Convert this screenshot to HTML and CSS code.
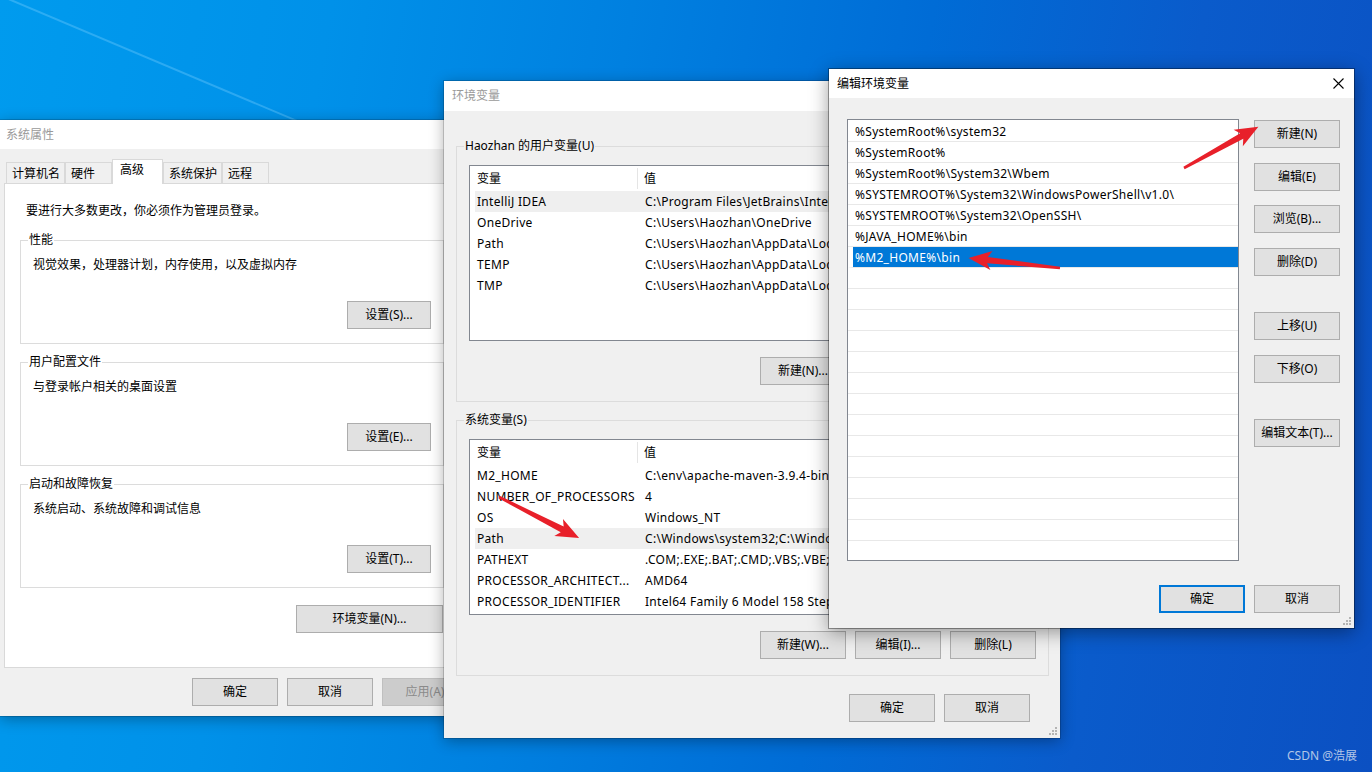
FILE: index.html
```html
<!DOCTYPE html>
<html lang="zh-CN">
<head>
<meta charset="utf-8">
<title>编辑环境变量</title>
<link rel="stylesheet" href="styles.css">
</head>
<body>
<div class="desktop">
  <svg class="streak" width="1372" height="772" viewBox="0 0 1372 772" aria-hidden="true">
    <line x1="6" y1="-2" x2="470" y2="194" stroke="#7fd0ff" stroke-opacity="0.35" stroke-width="2"/>
  </svg>

  <section class="win win-sys">
    <header class="titlebar inactive">系统属性</header>
    <div class="sys-body">
      <nav class="tabs">
        <span class="tab">计算机名</span>
        <span class="tab">硬件</span>
        <span class="tab active">高级</span>
        <span class="tab">系统保护</span>
        <span class="tab">远程</span>
      </nav>
      <div class="tab-panel">
        <p class="note">要进行大多数更改，你必须作为管理员登录。</p>
        <fieldset class="group sys-group">
          <legend>性能</legend>
          <p class="desc">视觉效果，处理器计划，内存使用，以及虚拟内存</p>
          <button class="btn btn-set">设置(S)...</button>
        </fieldset>
        <fieldset class="group sys-group">
          <legend>用户配置文件</legend>
          <p class="desc">与登录帐户相关的桌面设置</p>
          <button class="btn btn-set">设置(E)...</button>
        </fieldset>
        <fieldset class="group sys-group">
          <legend>启动和故障恢复</legend>
          <p class="desc">系统启动、系统故障和调试信息</p>
          <button class="btn btn-set">设置(T)...</button>
        </fieldset>
        <div class="env-row">
          <button class="btn btn-env">环境变量(N)...</button>
        </div>
      </div>
      <div class="footer sys-footer">
        <button class="btn">确定</button>
        <button class="btn">取消</button>
        <button class="btn disabled">应用(A)</button>
      </div>
    </div>
  </section>

  <section class="win win-env">
    <header class="titlebar inactive env-title">环境变量</header>
    <div class="env-body">
      <fieldset class="group env-group">
        <legend>Haozhan 的用户变量(U)</legend>
        <div class="vlist">
          <div class="vhead"><span class="vh-name">变量</span><span class="vh-val">值</span></div>
          <div class="vrow hl"><span class="n">IntelliJ IDEA</span><span class="v">C:\Program Files\JetBrains\Intel</span></div>
          <div class="vrow"><span class="n">OneDrive</span><span class="v">C:\Users\Haozhan\OneDrive</span></div>
          <div class="vrow"><span class="n">Path</span><span class="v">C:\Users\Haozhan\AppData\Loc</span></div>
          <div class="vrow"><span class="n">TEMP</span><span class="v">C:\Users\Haozhan\AppData\Loc</span></div>
          <div class="vrow"><span class="n">TMP</span><span class="v">C:\Users\Haozhan\AppData\Loc</span></div>
        </div>
        <div class="btn-row">
          <button class="btn">新建(N)...</button>
          <button class="btn">编辑(E)...</button>
          <button class="btn">删除(D)</button>
        </div>
      </fieldset>
      <fieldset class="group env-group env-group2">
        <legend>系统变量(S)</legend>
        <div class="vlist">
          <div class="vhead"><span class="vh-name">变量</span><span class="vh-val">值</span></div>
          <div class="vrow"><span class="n">M2_HOME</span><span class="v">C:\env\apache-maven-3.9.4-bin\</span></div>
          <div class="vrow"><span class="n">NUMBER_OF_PROCESSORS</span><span class="v">4</span></div>
          <div class="vrow"><span class="n">OS</span><span class="v">Windows_NT</span></div>
          <div class="vrow hl"><span class="n">Path</span><span class="v">C:\Windows\system32;C:\Windo</span></div>
          <div class="vrow"><span class="n">PATHEXT</span><span class="v">.COM;.EXE;.BAT;.CMD;.VBS;.VBE;</span></div>
          <div class="vrow"><span class="n">PROCESSOR_ARCHITECT...</span><span class="v">AMD64</span></div>
          <div class="vrow"><span class="n">PROCESSOR_IDENTIFIER</span><span class="v">Intel64 Family 6 Model 158 Step</span></div>
        </div>
        <div class="btn-row">
          <button class="btn">新建(W)...</button>
          <button class="btn">编辑(I)...</button>
          <button class="btn">删除(L)</button>
        </div>
      </fieldset>
      <div class="footer env-footer">
        <button class="btn">确定</button>
        <button class="btn">取消</button>
      </div>
    </div>
    <svg class="grip" width="8" height="8" viewBox="0 0 8 8" aria-hidden="true">
      <rect x="6" y="0" width="2" height="2"/><rect x="3" y="3" width="2" height="2"/><rect x="6" y="3" width="2" height="2"/>
      <rect x="0" y="6" width="2" height="2"/><rect x="3" y="6" width="2" height="2"/><rect x="6" y="6" width="2" height="2"/>
    </svg>
  </section>

  <section class="win win-edit">
    <header class="titlebar edit-title">
      <span>编辑环境变量</span>
      <svg class="close" width="11" height="11" viewBox="0 0 11 11" aria-hidden="true">
        <path d="M0.5 0.5 L10.5 10.5 M10.5 0.5 L0.5 10.5" stroke="#000" stroke-width="1.1" fill="none"/>
      </svg>
    </header>
    <div class="edit-body">
      <div class="edit-main">
        <div class="elist">
          <div class="erow">%SystemRoot%\system32</div>
          <div class="erow">%SystemRoot%</div>
          <div class="erow">%SystemRoot%\System32\Wbem</div>
          <div class="erow">%SYSTEMROOT%\System32\WindowsPowerShell\v1.0\</div>
          <div class="erow">%SYSTEMROOT%\System32\OpenSSH\</div>
          <div class="erow">%JAVA_HOME%\bin</div>
          <div class="erow sel">%M2_HOME%\bin</div>
          <div class="erow"></div><div class="erow"></div><div class="erow"></div><div class="erow"></div>
          <div class="erow"></div><div class="erow"></div><div class="erow"></div><div class="erow"></div>
          <div class="erow"></div><div class="erow"></div><div class="erow"></div><div class="erow"></div>
          <div class="erow"></div><div class="erow"></div>
        </div>
        <div class="ebtns">
          <button class="btn">新建(N)</button>
          <button class="btn">编辑(E)</button>
          <button class="btn">浏览(B)...</button>
          <button class="btn">删除(D)</button>
          <button class="btn sep">上移(U)</button>
          <button class="btn">下移(O)</button>
          <button class="btn sep">编辑文本(T)...</button>
        </div>
      </div>
      <div class="footer edit-footer">
        <button class="btn primary">确定</button>
        <button class="btn">取消</button>
      </div>
    </div>
    <svg class="grip" width="8" height="8" viewBox="0 0 8 8" aria-hidden="true">
      <rect x="6" y="0" width="2" height="2"/><rect x="3" y="3" width="2" height="2"/><rect x="6" y="3" width="2" height="2"/>
      <rect x="0" y="6" width="2" height="2"/><rect x="3" y="6" width="2" height="2"/><rect x="6" y="6" width="2" height="2"/>
    </svg>
  </section>

  <svg class="arrows" width="1372" height="772" viewBox="0 0 1372 772" aria-hidden="true">
    <polygon transform="translate(1184,168) rotate(-29)" points="0,-1.3 66,-3.2 62,-9.5 85,0 62,9.5 66,3.2 0,1.3"/>
    <polygon transform="translate(1060,268) rotate(186.2)" points="0,-1.3 73,-3.2 69,-9.5 92,0 69,9.5 73,3.2 0,1.3"/>
    <polygon transform="translate(499,497) rotate(27.1)" points="0,-1.3 71,-3.2 67,-9.5 90,0 67,9.5 71,3.2 0,1.3"/>
  </svg>

  <div class="watermark">CSDN @浩展</div>
</div>
</body>
</html>
```

FILE: styles.css
```css
* { box-sizing: border-box; }
html, body { margin: 0; padding: 0; }
body {
  font-family: "Noto Sans", "Noto Sans CJK SC", sans-serif;
  font-size: 12px;
  line-height: 16px;
  color: #000;
}
p { margin: 0; }

.desktop {
  position: relative;
  width: 1372px;
  height: 772px;
  overflow: hidden;
  background: linear-gradient(100deg, #009bee 0%, #0091e9 22%, #0080e0 42%, #006cd6 62%, #0a5bcb 80%, #0b50c2 100%);
}
.streak { position: absolute; left: 0; top: 0; }

/* windows */
.win {
  position: absolute;
  display: flex;
  flex-direction: column;
  background: #f0f0f0;
  box-shadow: 0 0 0 1px rgba(0, 0, 0, 0.16), 0 3px 14px rgba(0, 0, 0, 0.32);
}
.titlebar {
  flex: none;
  height: 29px;
  display: flex;
  align-items: center;
  background: #fff;
  padding-left: 6px;
}
.titlebar.inactive { color: #9a9a9a; }

.btn {
  font: inherit;
  line-height: 16px;
  color: #000;
  width: 86px;
  height: 28px;
  padding: 0;
  background: #e1e1e1;
  border: 1px solid #adadad;
  border-radius: 0;
  flex: none;
}
.btn.disabled { background: #cccccc; border-color: #bfbfbf; color: #8a8a8a; }
.btn.primary { border: 2px solid #0078d7; }

.footer { display: flex; justify-content: flex-end; gap: 9px; flex: none; }

.group {
  margin: 0;
  border: 1px solid #dcdcdc;
  min-width: 0;
}
.group legend {
  padding: 0 1px;
  margin-left: -5px;
  line-height: 16px;
}

/* 系统属性 */
.win-sys { left: 0; top: 120px; width: 477px; height: 596px; }
.sys-body { flex: 1; display: flex; flex-direction: column; padding: 10px 4px 0 4px; }
.tabs {
  display: flex;
  align-items: flex-end;
  height: 24px;
  padding-left: 2px;
  position: relative;
  z-index: 1;
}
.tab {
  height: 21px;
  min-width: 47px;
  padding: 0 4px 0 5px;
  line-height: 21px;
  border: 1px solid #d9d9d9;
  border-bottom: none;
  background: #f0f0f0;
  white-space: nowrap;
}
.tab.active {
  height: 25px;
  min-width: 51px;
  margin-bottom: -1px;
  padding: 0 6px 0 7px;
  line-height: 20px;
  background: #fff;
  position: relative;
  z-index: 2;
}
.tab-panel {
  height: 485px;
  background: #fff;
  border: 1px solid #d9d9d9;
  padding-top: 19px;
  display: flex;
  flex-direction: column;
}
.note { margin-left: 21px; margin-bottom: 13px; }
.sys-group {
  margin: 0 28px 10px 15px;
  padding: 9px 12px 14px 12px;
}
.btn-set { display: block; width: 84px; margin: 28px 0 0 auto; }
.env-row { display: flex; justify-content: flex-end; margin-top: 7px; padding-right: 29px; }
.btn-env { width: 147px; }
.sys-footer { margin-top: 10px; padding-right: 5px; }

/* 环境变量 */
.win-env { left: 444px; top: 81px; width: 616px; height: 657px; }
.env-title { height: 30px; padding-left: 8px; }
.env-body { flex: 1; display: flex; flex-direction: column; padding: 27px 11px 0 12px; }
.env-group { padding: 11px 12px 16px 12px; }
.env-group2 { margin-top: 10px; }
.vlist {
  height: 176px;
  background: #fff;
  border: 1px solid #828790;
  overflow: hidden;
}
.vhead { display: flex; height: 25px; }
.vh-name {
  width: 168px;
  margin: 2px 0;
  padding-left: 7px;
  line-height: 21px;
  border-right: 1px solid #e5e5e5;
}
.vh-val { padding-left: 6px; line-height: 25px; }
.vrow {
  display: flex;
  height: 21px;
  line-height: 21px;
  margin-left: 5px;
  white-space: nowrap;
  letter-spacing: 0.3px;
}
.vrow.hl { background: #efefef; }
.vrow .n { flex: none; width: 163px; padding-left: 2px; overflow: hidden; }
.vrow .v { flex: none; width: 191px; padding-left: 7px; overflow: hidden; }
.btn-row { display: flex; justify-content: flex-end; gap: 9px; margin-top: 16px; }
.env-footer { margin-top: 18px; padding-right: 19px; }

.grip { position: absolute; right: 3px; bottom: 3px; fill: #b4b4b4; }

/* 编辑环境变量 */
.win-edit {
  left: 829px; top: 69px; width: 525px; height: 559px;
  box-shadow: 0 0 0 1px rgba(0, 0, 0, 0.35), 0 4px 18px rgba(0, 0, 0, 0.4);
}
.edit-title { padding-left: 8px; color: #000; }
.close { margin-left: auto; margin-right: 10px; }
.edit-body { flex: 1; display: flex; flex-direction: column; padding: 21px 14px 0 18px; }
.edit-main { display: flex; }
.elist {
  width: 392px;
  height: 442px;
  background: #fff;
  border: 1px solid #828790;
  padding-top: 1px;
  overflow: hidden;
}
.erow {
  height: 21px;
  line-height: 21px;
  padding-left: 7px;
  border-bottom: 1px solid #e8e8e8;
  white-space: nowrap;
  letter-spacing: 0.3px;
}
.erow.sel {
  background: #0078d7;
  color: #fff;
  border-left: 5px solid #fff;
  padding-left: 2px;
}
.ebtns { display: flex; flex-direction: column; margin-left: 15px; padding-top: 1px; }
.ebtns .btn { margin-top: 14.67px; }
.ebtns .btn:first-child { margin-top: 0; }
.ebtns .btn.sep { margin-top: 36px; }
.edit-footer { margin-top: 24px; }

.arrows { position: absolute; left: 0; top: 0; fill: #e8202a; }

.watermark {
  position: absolute;
  right: 15px;
  bottom: 8px;
  color: rgba(225, 232, 242, 0.78);
  font-size: 12px;
  line-height: 16px;
}
```
